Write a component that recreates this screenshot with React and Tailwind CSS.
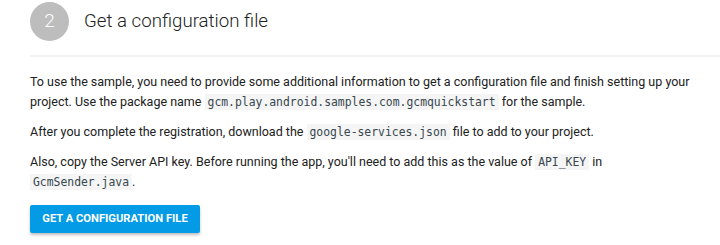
import React from 'react';

// ── Inline code chip ──────────────────────────────────────────────────────────
function Code({ children }) {
  return (
    <code className="bg-[#f5f5f5] text-[#37474f] px-[3px] py-[1px] text-[11.4px] font-['DejaVu_Sans_Mono',monospace]">
      {children}
    </code>
  );
}

// ── Main Page ─────────────────────────────────────────────────────────────────
export default function App() {
  return (
    <div className="w-[720px] h-[245px] bg-white overflow-hidden font-['Roboto',sans-serif] text-[#212121]">

      {/* Step header */}
      <div className="flex items-center h-[42px] pl-[30px] pt-[1px]">
        <div className="w-[39px] h-[39px] rounded-full bg-[#bdbdbd] flex items-center justify-center text-white text-[19px] font-light">
          2
        </div>
        <h2 className="ml-[15px] text-[18.7px] font-light leading-none">Get a configuration file</h2>
      </div>

      {/* Divider */}
      <div className="ml-[30px] mt-[13px] h-[2px] bg-[#f2f2f2]" />

      {/* Body */}
      <div className="pl-[30px] pr-[14px] pt-[15px] text-[12.5px] leading-[20px]">
        <p className="mb-[10px]">
          To use the sample, you need to provide some additional information to get a configuration file and finish setting up your
          project. Use the package name <Code>gcm.play.android.samples.com.gcmquickstart</Code> for the sample.
        </p>
        <p className="mb-[10px]">
          After you complete the registration, download the <Code>google-services.json</Code> file to add to your project.
        </p>
        <p>
          Also, copy the Server API key. Before running the app, you'll need to add this as the value of <Code>API_KEY</Code> in{' '}
          <Code>GcmSender.java</Code>.
        </p>

        <button className="mt-[13px] h-[28px] w-[170px] rounded-[2px] bg-[#039be5] text-white text-[11.2px] font-bold uppercase shadow-[0_2px_3px_rgba(0,0,0,0.25)]">
          Get a configuration file
        </button>
      </div>
    </div>
  );
}
